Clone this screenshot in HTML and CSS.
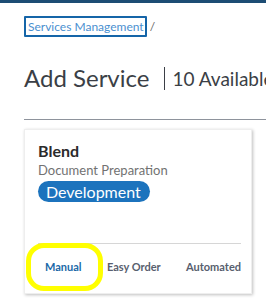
FILE: index.html
```html
<!DOCTYPE html>
<html lang="en">
<head>
  <meta charset="UTF-8" />
  <title>Add Service</title>
  <link rel="stylesheet" href="styles.css">
</head>
<body>
  <div class="top-bar"></div>
  <main class="page">
    <nav class="breadcrumb">
      <a href="#" class="crumb-link">Services Management</a>
      <span class="crumb-sep">/</span>
    </nav>

    <div class="title-row">
      <h1 class="title">Add Service</h1>
      <span class="count">10 Available</span>
    </div>

    <hr class="rule">

    <div class="card">
      <div class="card-body">
        <div class="card-title">Blend</div>
        <div class="card-sub">Document Preparation</div>
        <span class="pill">Development</span>
      </div>
      <div class="tabs">
        <span class="tab active">Manual</span>
        <span class="tab">Easy Order</span>
        <span class="tab">Automated</span>
        <span class="highlight"></span>
      </div>
    </div>
  </main>
</body>
</html>
```

FILE: styles.css
```css
*, *::before, *::after {
  box-sizing: border-box;
}

html, body {
  margin: 0;
  padding: 0;
  overflow: hidden;
}

body {
  font-family: "Lato", "Open Sans", sans-serif;
  background: #ffffff;
  color: #333;
  width: 266px;
  height: 305px;
}

.top-bar {
  height: 3px;
  background: #1d4d74;
}

.page {
  padding-left: 24px;
}

.breadcrumb {
  margin-top: 13px;
  display: flex;
  align-items: center;
  font-size: 12px;
  height: 21px;
}

.crumb-link {
  display: inline-block;
  border: 2px solid #1565a8;
  border-radius: 1px;
  color: #4a8fd0;
  text-decoration: none;
  height: 21px;
  line-height: 17px;
  padding: 0 1px 0 2px;
}

.crumb-sep {
  color: #666;
  margin-left: 3px;
}

.title-row {
  display: flex;
  align-items: center;
  margin-top: 26px;
  white-space: nowrap;
}

.title {
  margin: 0;
  font-size: 24px;
  font-weight: 400;
  color: #3b3f46;
  line-height: 30px;
}

.count {
  margin-left: 15px;
  padding-left: 7px;
  border-left: 1px solid #3b3f46;
  font-size: 19px;
  color: #3b3f46;
  line-height: 23px;
  height: 23px;
}

.rule {
  margin: 26px 0 0 0;
  border: none;
  border-top: 1px solid #8e939c;
}

.card {
  margin-top: 9px;
  width: 228px;
  height: 165px;
  background: #fff;
  border: 1px solid #eeeeee;
  box-shadow: 1px 1px 3px rgba(0, 0, 0, 0.25);
  display: flex;
  flex-direction: column;
  justify-content: space-between;
}

.card-body {
  padding: 11px 13px 0 13px;
}

.card-title {
  font-size: 16px;
  font-weight: 700;
  color: #2b2b2b;
  line-height: 19px;
}

.card-sub {
  font-size: 13px;
  color: #727272;
  margin-top: 2px;
  line-height: 17px;
}

.pill {
  display: inline-block;
  margin-top: 2px;
  background: #1c73bd;
  color: #fff;
  font-size: 16px;
  line-height: 21px;
  height: 21px;
  padding: 0 9px 0 8px;
  border-radius: 11px;
}

.tabs {
  position: relative;
  margin: 0 10px 0 13px;
  border-top: 1px solid #d6d6d6;
  display: flex;
  justify-content: space-between;
  align-items: center;
  height: 50px;
  padding: 0 0 4px 7px;
}

.tab {
  font-size: 11px;
  font-weight: 700;
  color: #58606e;
}

.tab.active {
  color: #1a69a8;
}

.highlight {
  position: absolute;
  left: -12px;
  top: -1px;
  width: 77px;
  height: 48px;
  border: 5px solid #ffff00;
  border-radius: 18px;
}
```
